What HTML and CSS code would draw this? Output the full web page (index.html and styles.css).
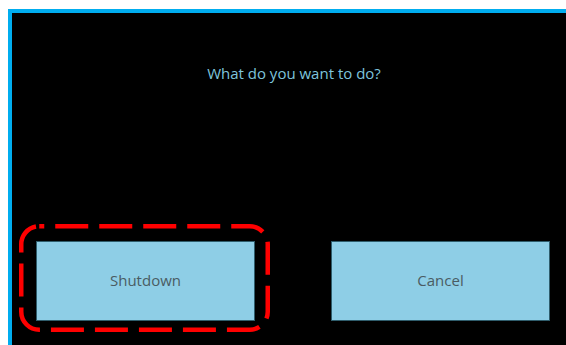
FILE: index.html
```html
<!DOCTYPE html>
<html lang="en">
<head>
  <meta charset="UTF-8">
  <meta name="viewport" content="width=device-width, initial-scale=1.0">
  <title>Shutdown</title>
  <link rel="stylesheet" href="styles.css">
</head>
<body>
  <div class="frame">
    <p class="question">What do you want to do?</p>
    <div class="actions">
      <div class="highlight-wrap">
        <button class="action">Shutdown</button>
        <!-- marca roja alrededor del boton -->
        <svg class="highlight" width="251" height="108" viewBox="0 0 251 108">
          <rect x="2.25" y="2.25" width="246.5" height="103.5" rx="18" ry="18"
                fill="none" stroke="#ff0000" stroke-width="4.5"
                stroke-dasharray="33 11" stroke-dashoffset="28"/>
        </svg>
      </div>
      <button class="action">Cancel</button>
    </div>
  </div>
</body>
</html>
```

FILE: styles.css
```css
html, body {
  height: 100%;
}
body {
  margin: 0;
  background-color: #fff;
  overflow: hidden;
  font-family: "Open Sans", "Noto Sans", sans-serif;
}
.frame {
  box-sizing: border-box;
  margin: 9px 0 0 8px;
  height: calc(100% - 9px);
  background-color: #000;
  border-top: 4px solid #00adef;
  border-left: 4px solid #00adef;
}
.question {
  margin: 0;
  padding: 50px 0 0 10px;
  text-align: center;
  color: #7ec4dc;
  font-size: 15px;
  line-height: 20px;
}
.actions {
  display: flex;
  justify-content: space-between;
  padding: 158px 16px 0 24px;
}
.highlight-wrap {
  position: relative;
}
.action {
  display: block;
  width: 219px;
  height: 80px;
  margin: 0;
  padding: 0 0 3px;
  background-color: #8ecee6;
  border: 1px solid #2f5d6c;
  color: #4a5c63;
  font-family: "Open Sans", "Noto Sans", sans-serif;
  font-size: 15px;
  cursor: pointer;
}
.highlight {
  position: absolute;
  left: -17px;
  top: -17px;
  pointer-events: none;
}
```
